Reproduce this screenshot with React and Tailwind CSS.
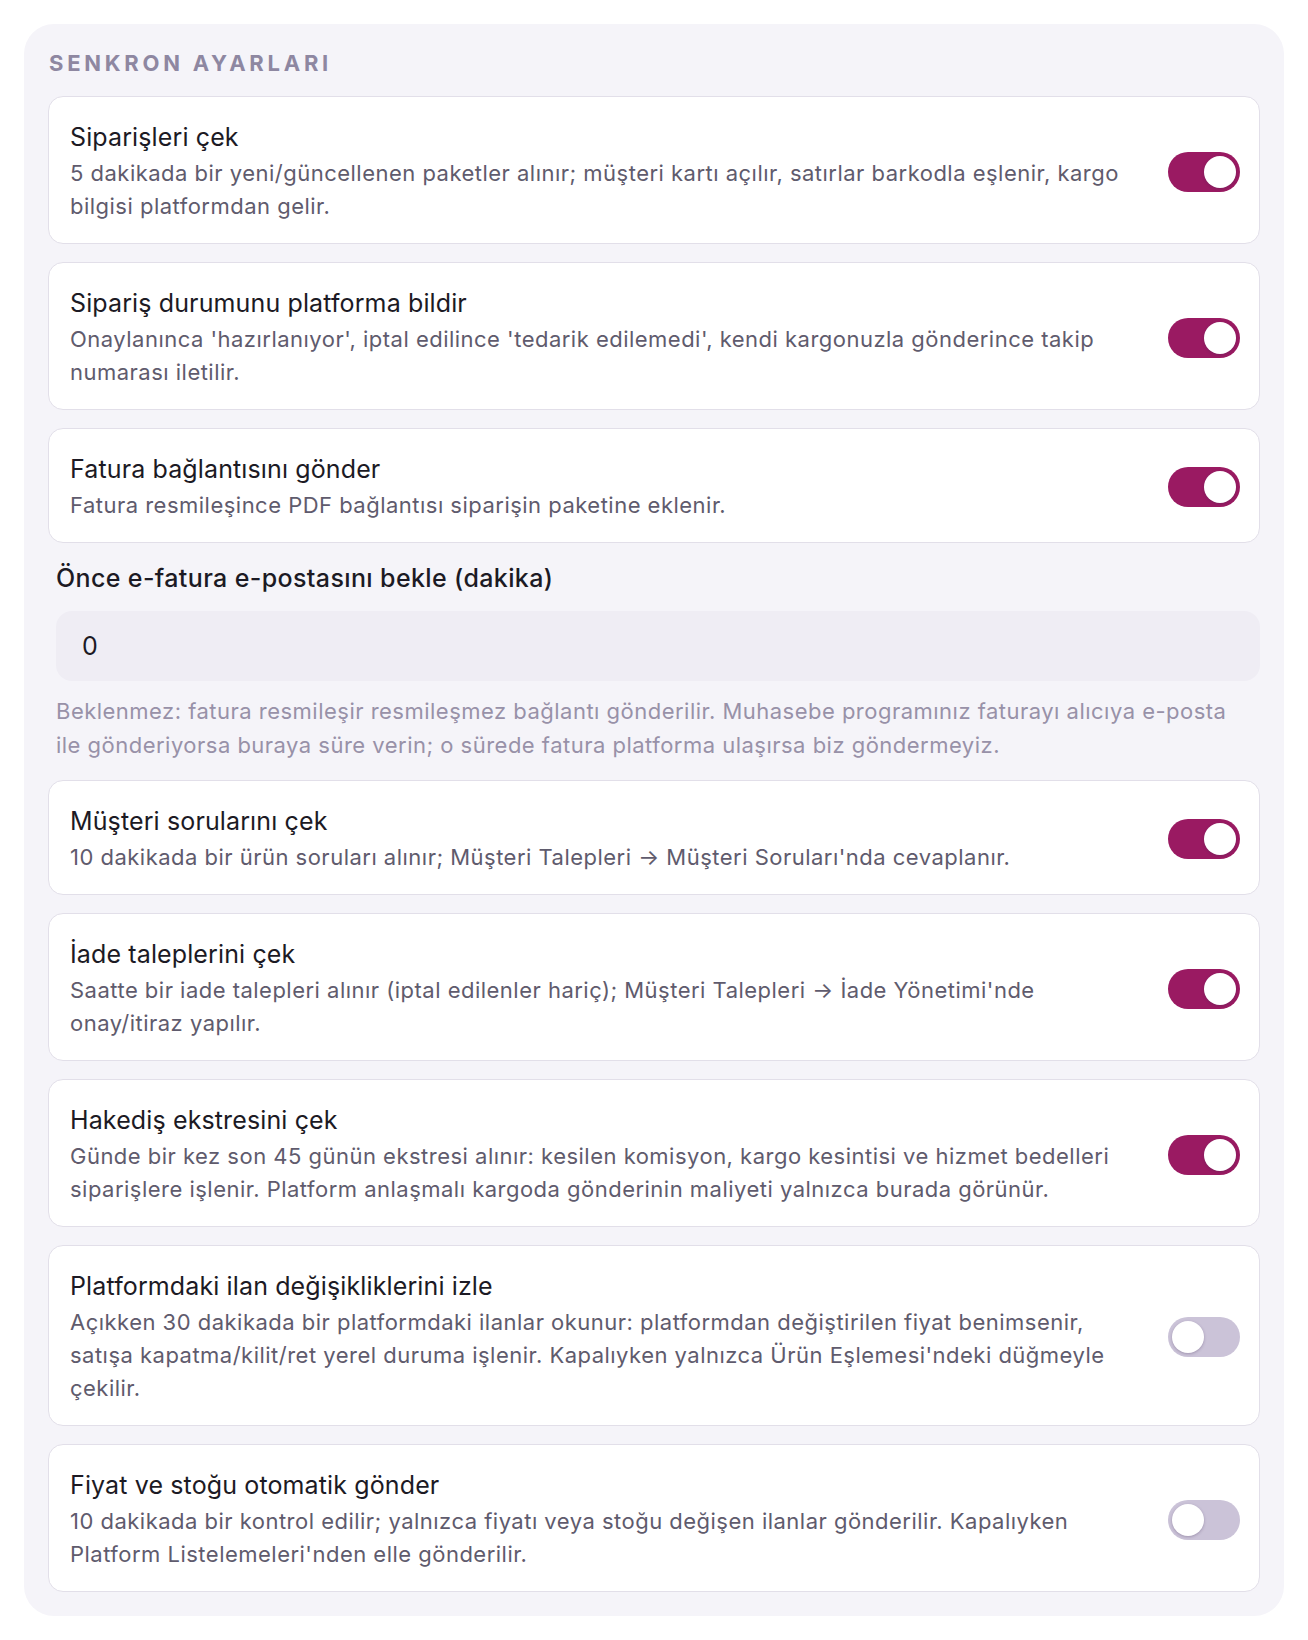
import React, { useState } from "react"

const items = [
	{
		title: "Siparişleri çek",
		desc: "5 dakikada bir yeni/güncellenen paketler alınır; müşteri kartı açılır, satırlar barkodla eşlenir, kargo bilgisi platformdan gelir.",
		on: true,
	},
	{
		title: "Sipariş durumunu platforma bildir",
		desc: "Onaylanınca 'hazırlanıyor', iptal edilince 'tedarik edilemedi', kendi kargonuzla gönderince takip numarası iletilir.",
		on: true,
	},
	{
		title: "Fatura bağlantısını gönder",
		desc: "Fatura resmileşince PDF bağlantısı siparişin paketine eklenir.",
		on: true,
	},
]

const items2 = [
	{
		title: "Müşteri sorularını çek",
		desc: "10 dakikada bir ürün soruları alınır; Müşteri Talepleri → Müşteri Soruları'nda cevaplanır.",
		on: true,
	},
	{
		title: "İade taleplerini çek",
		desc: "Saatte bir iade talepleri alınır (iptal edilenler hariç); Müşteri Talepleri → İade Yönetimi'nde onay/itiraz yapılır.",
		on: true,
	},
	{
		title: "Hakediş ekstresini çek",
		desc: "Günde bir kez son 45 günün ekstresi alınır: kesilen komisyon, kargo kesintisi ve hizmet bedelleri siparişlere işlenir. Platform anlaşmalı kargoda gönderinin maliyeti yalnızca burada görünür.",
		on: true,
	},
	{
		title: "Platformdaki ilan değişikliklerini izle",
		desc: "Açıkken 30 dakikada bir platformdaki ilanlar okunur: platformdan değiştirilen fiyat benimsenir, satışa kapatma/kilit/ret yerel duruma işlenir. Kapalıyken yalnızca Ürün Eşlemesi'ndeki düğmeyle çekilir.",
		on: false,
	},
	{
		title: "Fiyat ve stoğu otomatik gönder",
		desc: "10 dakikada bir kontrol edilir; yalnızca fiyatı veya stoğu değişen ilanlar gönderilir. Kapalıyken Platform Listelemeleri'nden elle gönderilir.",
		on: false,
	},
]

function Toggle({ initial }) {
	const [on, setOn] = useState(initial)
	return (
		<button
			onClick={() => setOn(!on)}
			className={`relative shrink-0 w-[72px] h-[40px] rounded-full transition-colors ${on ? "bg-[#9a1a62]" : "bg-[#cbc3d8]"}`}
		>
			<span
				className={`absolute top-[4px] w-[32px] h-[32px] rounded-full bg-white shadow-[0_1px_3px_rgba(60,40,80,0.3)] transition-all ${on ? "left-[36px]" : "left-[4px]"}`}
			></span>
		</button>
	)
}

function Row({ title, desc, on }) {
	return (
		<div className="flex items-center gap-6 bg-white border border-[#e2dfe9] rounded-[15px] pt-[23px] pb-[20px] pl-[21px] pr-[19px]">
			<div className="flex-1">
				<div className="text-[25px] leading-[34px] tracking-[0.005em] text-[#1c1a24]">{title}</div>
				<div className="mt-[3px] text-[22px] leading-[33px] tracking-[0.022em] text-[#5f5b6d]">{desc}</div>
			</div>
			<Toggle initial={on} />
		</div>
	)
}

export default function App() {
	const [wait, setWait] = useState("0")
	return (
		<div className="bg-white p-6 pb-[26px]" style={{ fontFamily: "Inter, 'Noto Sans', sans-serif" }}>
			<div className="bg-[#f5f4f9] rounded-[30px] px-6 pt-6 pb-6">
				<h2 className="text-[22px] leading-[30px] font-bold tracking-[0.17em] text-[#8e87a1] mb-[18px] pl-px">
					SENKRON AYARLARI
				</h2>
				<div className="flex flex-col gap-[18px]">
					{items.map((it) => (
						<Row key={it.title} {...it} />
					))}

					<div className="pl-2">
						<label className="block text-[25px] leading-[34px] font-medium tracking-[0.015em] text-[#1c1a24]">
							Önce e-fatura e-postasını bekle (dakika)
						</label>
						<input
							value={wait}
							onChange={(e) => setWait(e.target.value)}
							className="mt-4 w-full h-[70px] rounded-[16px] bg-[#efedf4] px-[26px] text-[25px] text-[#1c1a24] outline-none"
						/>
						<p className="mt-[13px] pr-6 text-[22px] leading-[34px] tracking-[0.022em] text-[#9891a8]">
							Beklenmez: fatura resmileşir resmileşmez bağlantı gönderilir. Muhasebe programınız faturayı alıcıya e-posta ile gönderiyorsa buraya süre verin; o sürede fatura platforma ulaşırsa biz göndermeyiz.
						</p>
					</div>

					{items2.map((it) => (
						<Row key={it.title} {...it} />
					))}
				</div>
			</div>
		</div>
	)
}
